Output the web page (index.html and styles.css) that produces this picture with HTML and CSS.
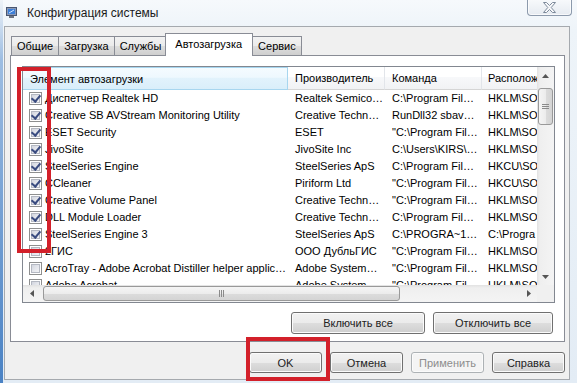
FILE: index.html
```html
<!DOCTYPE html>
<html lang="ru">
<head>
    <meta charset="UTF-8">
    <meta name="viewport" content="width=device-width, initial-scale=1.0">
    <title>Конфигурация системы</title>
    <link rel="stylesheet" href="styles.css">
</head>
<body>

    <div class="window">
        <div class="titlebar">
            <svg class="app-icon" width="11" height="11" viewBox="0 0 11 11">
                <rect x="0.5" y="0.5" width="10" height="8" fill="#8a9ab8" stroke="#4a5670"/>
                <rect x="2" y="2" width="7" height="5" fill="#3d7fd8"/>
                <path d="M3 6 L8 3" stroke="#cfe4ff" stroke-width="1"/>
                <rect x="3" y="9" width="5" height="2" fill="#6d7480"/>
            </svg>
            <span class="title">Конфигурация системы</span>
            <div class="close-btn">
                <svg width="13" height="11" viewBox="0 0 13 11">
                    <polygon points="0.5,0.5 3.5,0.5 6.5,3.5 9.5,0.5 12.5,0.5 8.2,5.5 12.5,10.5 9.5,10.5 6.5,7.5 3.5,10.5 0.5,10.5 4.8,5.5" fill="#f7f8fa" stroke="#7d8a9b"/>
                </svg>
            </div>
        </div>

        <div class="client">
            <div class="tabs">
                <div class="tab">Общие</div>
                <div class="tab">Загрузка</div>
                <div class="tab">Службы</div>
                <div class="tab active">Автозагрузка</div>
                <div class="tab">Сервис</div>
            </div>

            <div class="panel">
                <div class="list">
                    <div class="list-view">
                        <div class="list-header">
                            <div class="col-head hot">Элемент автозагрузки</div>
                            <div class="col-head">Производитель</div>
                            <div class="col-head">Команда</div>
                            <div class="col-head">Располож</div>
                        </div>

                        <div class="list-row">
                            <div class="cell name"><span class="checkbox checked"></span>Диспетчер Realtek HD</div>
                            <div class="cell">Realtek Semico…</div>
                            <div class="cell">C:\Program Fil…</div>
                            <div class="cell">HKLM\SOF</div>
                        </div>
                        <div class="list-row">
                            <div class="cell name"><span class="checkbox checked"></span>Creative SB AVStream Monitoring Utility</div>
                            <div class="cell">Creative Techn…</div>
                            <div class="cell">RunDll32 sbav…</div>
                            <div class="cell">HKLM\SOF</div>
                        </div>
                        <div class="list-row">
                            <div class="cell name"><span class="checkbox checked"></span>ESET Security</div>
                            <div class="cell">ESET</div>
                            <div class="cell">"C:\Program Fil…</div>
                            <div class="cell">HKLM\SOF</div>
                        </div>
                        <div class="list-row">
                            <div class="cell name"><span class="checkbox checked"></span>JivoSite</div>
                            <div class="cell">JivoSite Inc</div>
                            <div class="cell">C:\Users\KIRS\…</div>
                            <div class="cell">HKLM\SOF</div>
                        </div>
                        <div class="list-row">
                            <div class="cell name"><span class="checkbox checked"></span>SteelSeries Engine</div>
                            <div class="cell">SteelSeries ApS</div>
                            <div class="cell">C:\Program Fil…</div>
                            <div class="cell">HKCU\SOF</div>
                        </div>
                        <div class="list-row">
                            <div class="cell name"><span class="checkbox checked"></span>CCleaner</div>
                            <div class="cell">Piriform Ltd</div>
                            <div class="cell">"C:\Program Fil…</div>
                            <div class="cell">HKCU\SOF</div>
                        </div>
                        <div class="list-row">
                            <div class="cell name"><span class="checkbox checked"></span>Creative Volume Panel</div>
                            <div class="cell">Creative Techn…</div>
                            <div class="cell">"C:\Program Fil…</div>
                            <div class="cell">HKLM\SOF</div>
                        </div>
                        <div class="list-row">
                            <div class="cell name"><span class="checkbox checked"></span>DLL Module Loader</div>
                            <div class="cell">Creative Techn…</div>
                            <div class="cell">C:\Program Fil…</div>
                            <div class="cell">HKLM\SOF</div>
                        </div>
                        <div class="list-row">
                            <div class="cell name"><span class="checkbox checked"></span>SteelSeries Engine 3</div>
                            <div class="cell">SteelSeries ApS</div>
                            <div class="cell">C:\PROGRA~1…</div>
                            <div class="cell">C:\Progra</div>
                        </div>
                        <div class="list-row">
                            <div class="cell name"><span class="checkbox"></span>2ГИС</div>
                            <div class="cell">ООО ДубльГИС</div>
                            <div class="cell">"C:\Program Fil…</div>
                            <div class="cell">HKLM\SOF</div>
                        </div>
                        <div class="list-row">
                            <div class="cell name"><span class="checkbox"></span>AcroTray - Adobe Acrobat Distiller helper applic…</div>
                            <div class="cell">Adobe System…</div>
                            <div class="cell">"C:\Program Fil…</div>
                            <div class="cell">HKLM\SOF</div>
                        </div>
                        <div class="list-row">
                            <div class="cell name"><span class="checkbox"></span>Adobe Acrobat</div>
                            <div class="cell">Adobe System…</div>
                            <div class="cell">"C:\Program Fil…</div>
                            <div class="cell">HKLM\SOF</div>
                        </div>
                    </div>

                    <div class="vscroll">
                        <div class="sb-btn">
                            <svg width="7" height="4" viewBox="0 0 7 4"><polygon points="0,4 3.5,0 7,4" fill="#555"/></svg>
                        </div>
                        <div class="sb-track vtrack">
                            <div class="thumb vthumb">
                                <svg width="7" height="7" viewBox="0 0 7 7"><path d="M0 1.5H7M0 3.5H7M0 5.5H7" stroke="#8a8a8a"/></svg>
                            </div>
                        </div>
                        <div class="sb-btn">
                            <svg width="7" height="4" viewBox="0 0 7 4"><polygon points="0,0 7,0 3.5,4" fill="#555"/></svg>
                        </div>
                    </div>

                    <div class="hscroll">
                        <div class="sb-btn">
                            <svg width="4" height="7" viewBox="0 0 4 7"><polygon points="4,0 4,7 0,3.5" fill="#555"/></svg>
                        </div>
                        <div class="sb-track htrack">
                            <div class="thumb hthumb">
                                <svg width="7" height="7" viewBox="0 0 7 7"><path d="M1.5 0V7M3.5 0V7M5.5 0V7" stroke="#8a8a8a"/></svg>
                            </div>
                        </div>
                        <div class="sb-btn">
                            <svg width="4" height="7" viewBox="0 0 4 7"><polygon points="0,0 4,3.5 0,7" fill="#555"/></svg>
                        </div>
                    </div>

                    <div class="sb-corner"></div>
                </div>

                <div class="panel-buttons">
                    <button class="btn wide">Включить все</button>
                    <button class="btn mid">Отключить все</button>
                </div>
            </div>

            <div class="dialog-buttons">
                <button class="btn">OK</button>
                <button class="btn">Отмена</button>
                <button class="btn" disabled>Применить</button>
                <button class="btn">Справка</button>
            </div>
        </div>

        <!-- red marks drawn over the screenshot -->
        <div class="mark mark-checks"></div>
        <div class="mark mark-ok"></div>
    </div>

</body>
</html>
```

FILE: styles.css
```css
* {
    box-sizing: border-box;
}

html, body {
    margin: 0;
}

body {
    width: 577px;
    height: 383px;
    overflow: hidden;
    font-family: "Liberation Sans", Arial, sans-serif;
    font-size: 11px;
    color: #000000;
}

.window {
    position: relative;
    height: 383px;
    padding: 0 7px 3px 4px;
    display: flex;
    flex-direction: column;
    background:
        linear-gradient(180deg, #eef3f8 0, #9dbde2 60px, #4a82c4 100%) left top / 3px 100% no-repeat,
        linear-gradient(180deg, #f6f9fc 0, #eef4f9 30px, #e3ecf5 100%);
}

/* title bar */
.titlebar {
    height: 26px;
    display: flex;
    align-items: flex-start;
}

.app-icon {
    margin: 7px 0 0 2px;
}

.title {
    margin: 6px 0 0 10px;
    font-size: 12px;
    color: #1a1a1a;
}

.close-btn {
    margin-left: auto;
    margin-right: -2px;
    width: 45px;
    height: 17px;
    margin-top: -1px;
    border: 1px solid #8c9aac;
    border-top: none;
    border-radius: 0 0 4px 4px;
    background: linear-gradient(180deg, #f8fafc, #e6ebf1);
    box-shadow: inset 0 0 0 1px rgba(255, 255, 255, 0.7);
    display: flex;
    justify-content: center;
    align-items: center;
}

/* client area */
.client {
    flex: 1;
    display: flex;
    flex-direction: column;
    background-color: #f0f0f0;
    border: 1px solid #a5a9ae;
    padding: 6px 4px 6px 5px;
}

.tabs {
    display: flex;
    align-items: flex-end;
    height: 23px;
    padding-left: 1px;
    margin-bottom: -1px;
    position: relative;
    z-index: 1;
}

.tab {
    height: 19px;
    margin-bottom: 1px;
    margin-right: -1px;
    padding: 0 5px;
    line-height: 18px;
    border: 1px solid #898c95;
    border-bottom: none;
    background: linear-gradient(180deg, #f2f2f2 0%, #ebebeb 50%, #dddddd 51%, #cfcfcf 100%);
}

.tab.active {
    height: 23px;
    margin: 0 -1px 0 -1px;
    padding: 0 10px 0 9px;
    line-height: 20px;
    background: #ffffff;
    position: relative;
}

.panel {
    flex: 1;
    display: flex;
    flex-direction: column;
    background-color: #ffffff;
    border: 1px solid #898c95;
    padding: 10px 9px 7px 11px;
}

/* list view */
.list {
    height: 237px;
    border: 1px solid #828790;
    display: grid;
    grid-template-columns: 1fr 17px;
    grid-template-rows: 1fr 17px;
}

.list-view {
    overflow: hidden;
}

.list-header,
.list-row {
    display: grid;
    grid-template-columns: 265px 97px 97px 55px;
}

.list-header {
    height: 23px;
}

.col-head {
    padding-left: 7px;
    line-height: 22px;
    white-space: nowrap;
    overflow: hidden;
    border-right: 1px solid #e2e5ea;
    border-bottom: 1px solid #d5d5d5;
    background: linear-gradient(180deg, #ffffff 0%, #ffffff 45%, #f7f8fa 46%, #f1f2f4 100%);
}

.col-head:last-child {
    padding-left: 6px;
    border-right: none;
}

.col-head.hot {
    border: 1px solid #a7d6ef;
    border-left: none;
    background: linear-gradient(180deg, #f4fbff 0%, #eef8fe 45%, #e2f3fc 46%, #d9eefa 100%);
}

.list-row {
    height: 17px;
    line-height: 17px;
}

.cell {
    padding-left: 7px;
    white-space: nowrap;
    overflow: hidden;
}

.cell:last-child {
    padding-left: 6px;
}

.cell.name {
    display: flex;
    align-items: center;
    padding-left: 6px;
}

.checkbox {
    position: relative;
    flex: none;
    width: 13px;
    height: 13px;
    margin-right: 3px;
    border: 1px solid #8e8f8f;
    background: linear-gradient(135deg, #c8ccd6 0%, #e4e6ec 50%, #f8f8f9 100%);
    box-shadow: inset 0 0 0 1px #ffffff, inset 0 0 0 2px #b4b8c2;
}

.checkbox.checked::after {
    content: "";
    position: absolute;
    left: 3px;
    top: 0;
    width: 4px;
    height: 7px;
    border: solid #3a4c80;
    border-width: 0 2px 2px 0;
    transform: rotate(40deg);
}

/* scrollbars */
.vscroll {
    display: flex;
    flex-direction: column;
    background: linear-gradient(90deg, #e2e2e2 0, #efefef 3px, #f4f4f4 100%);
}

.hscroll {
    display: flex;
    background: linear-gradient(180deg, #e2e2e2 0, #efefef 3px, #f4f4f4 100%);
}

.sb-corner {
    background-color: #f0f0f0;
}

.sb-btn {
    flex: none;
    width: 17px;
    height: 17px;
    display: flex;
    justify-content: center;
    align-items: center;
}

.sb-track {
    flex: 1;
}

.vtrack {
    padding: 4px 1px 0 1px;
}

.htrack {
    padding: 1px 0 1px 3px;
}

.thumb {
    border: 1px solid #999999;
    border-radius: 3px;
    display: flex;
    justify-content: center;
    align-items: center;
}

.vthumb {
    height: 37px;
    background: linear-gradient(90deg, #f5f5f5 0%, #ececec 50%, #dcdcdc 51%, #d4d4d4 100%);
}

.hthumb {
    width: 357px;
    height: 15px;
    background: linear-gradient(180deg, #f5f5f5 0%, #ececec 50%, #dcdcdc 51%, #d4d4d4 100%);
}

/* buttons */
.panel-buttons {
    display: flex;
    justify-content: flex-end;
    gap: 8px;
    margin-top: 9px;
    padding-right: 2px;
}

.dialog-buttons {
    display: flex;
    justify-content: flex-end;
    gap: 8px;
    margin-top: 10px;
}

.btn {
    width: 73px;
    height: 21px;
    padding: 0;
    font-family: inherit;
    font-size: 11px;
    font-weight: 400;
    color: #222222;
    border: 1px solid #707070;
    border-radius: 3px;
    background: linear-gradient(180deg, #f2f2f2 0%, #ebebeb 50%, #dddddd 51%, #cfcfcf 100%);
    box-shadow: inset 0 0 0 1px #fbfbfb;
}

.btn.wide {
    width: 134px;
    height: 22px;
}

.btn.mid {
    width: 120px;
    height: 22px;
}

.btn:disabled {
    color: #8d8d8d;
    border-color: #adb2b5;
    background: #f4f4f4;
}

/* red annotation frames */
.mark {
    position: absolute;
    border: 4px solid #d3202a;
}

.mark-checks {
    left: 17px;
    top: 67px;
    width: 34px;
    height: 186px;
}

.mark-ok {
    left: 246px;
    top: 337px;
    width: 84px;
    height: 44px;
}
```
